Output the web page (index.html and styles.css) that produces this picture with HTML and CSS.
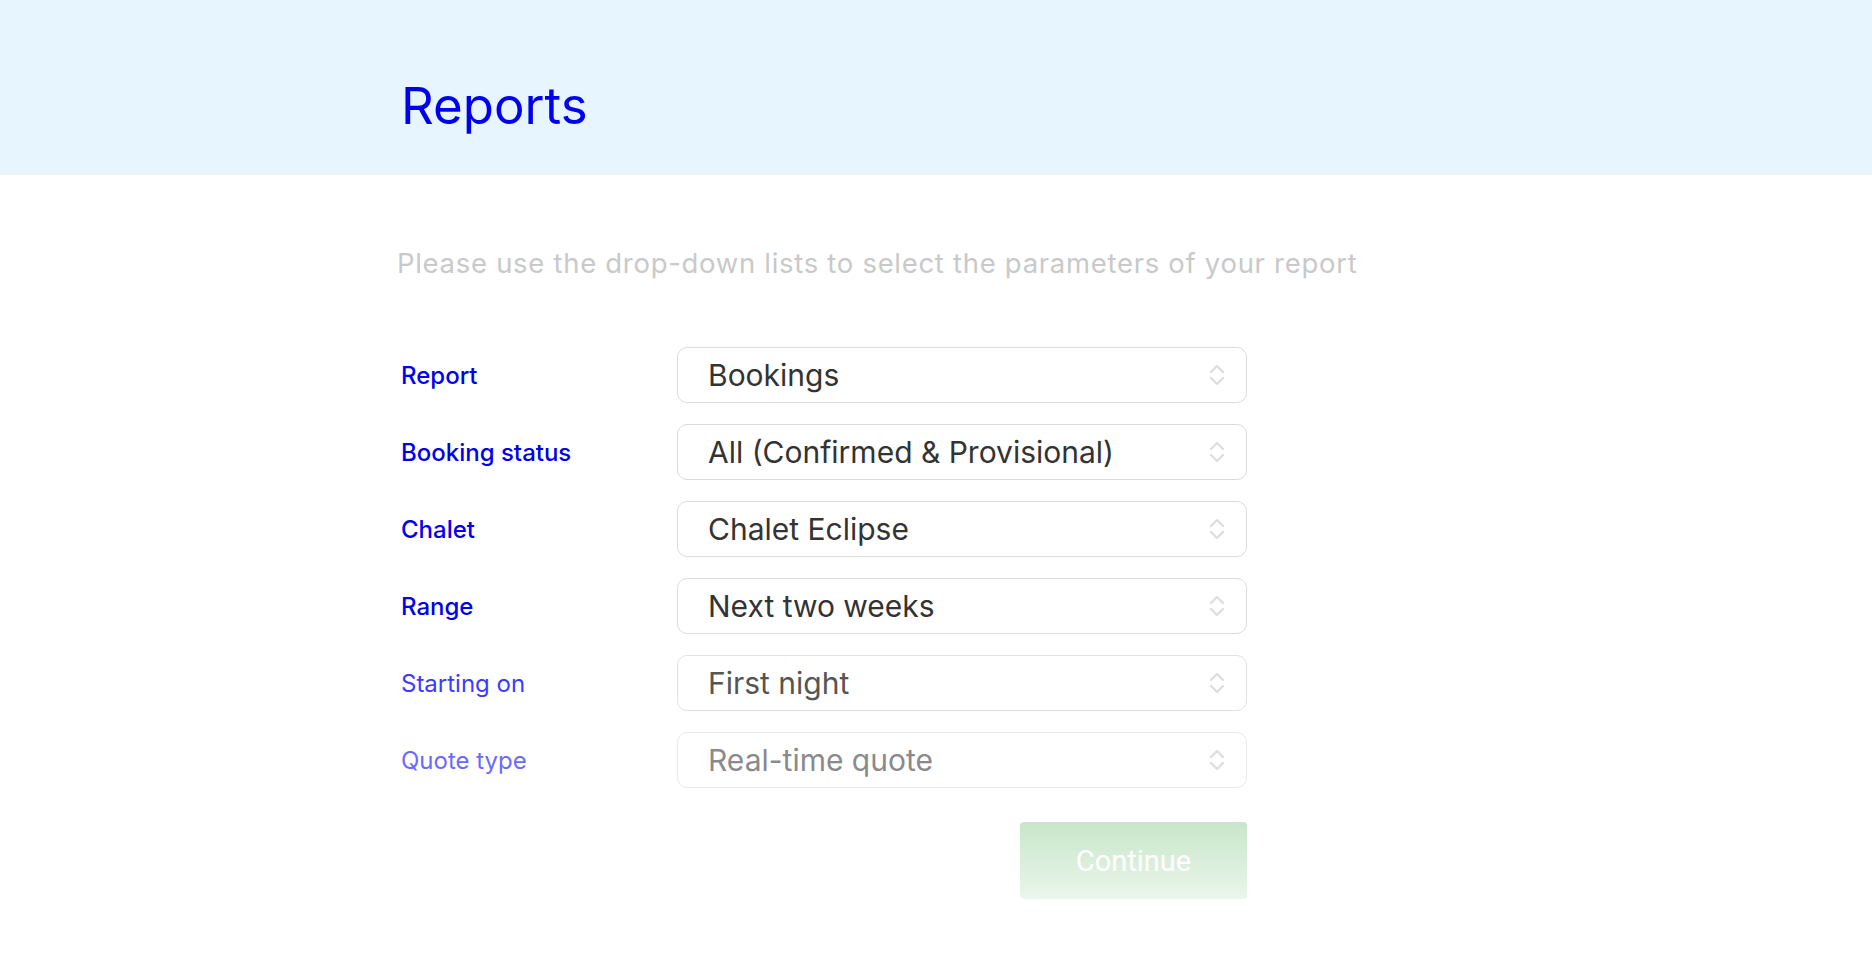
FILE: index.html
```html
<!DOCTYPE html>
<html>
  <head>
    <title>Reports</title>
    <link rel="stylesheet" href="styles.css">
  </head>
  <body>
    <div class="page-header">
      <div class="wrap">
        <h1>Reports</h1>
      </div>
    </div>

    <div class="wrap content">
      <p class="intro">Please use the drop-down lists to select the parameters of your report</p>

      <form class="report-form">
        <div class="row">
          <label class="lbl lbl-1" for="report">Report</label>
          <div class="select-box">
            <select id="report" class="sel sel-1">
              <option>Bookings</option>
            </select>
            <svg class="chev" width="18" height="24" viewBox="0 0 18 24"><path d="M3 9 L9 3 L15 9 M3 15 L9 21 L15 15" fill="none" stroke="currentColor" stroke-width="2.4" stroke-linecap="round" stroke-linejoin="round"/></svg>
          </div>
        </div>
        <div class="row">
          <label class="lbl lbl-1" for="status">Booking status</label>
          <div class="select-box">
            <select id="status" class="sel sel-1">
              <option>All (Confirmed &amp; Provisional)</option>
            </select>
            <svg class="chev" width="18" height="24" viewBox="0 0 18 24"><path d="M3 9 L9 3 L15 9 M3 15 L9 21 L15 15" fill="none" stroke="currentColor" stroke-width="2.4" stroke-linecap="round" stroke-linejoin="round"/></svg>
          </div>
        </div>
        <div class="row">
          <label class="lbl lbl-1" for="chalet">Chalet</label>
          <div class="select-box">
            <select id="chalet" class="sel sel-1">
              <option>Chalet Eclipse</option>
            </select>
            <svg class="chev" width="18" height="24" viewBox="0 0 18 24"><path d="M3 9 L9 3 L15 9 M3 15 L9 21 L15 15" fill="none" stroke="currentColor" stroke-width="2.4" stroke-linecap="round" stroke-linejoin="round"/></svg>
          </div>
        </div>
        <div class="row">
          <label class="lbl lbl-1" for="range">Range</label>
          <div class="select-box">
            <select id="range" class="sel sel-1">
              <option>Next two weeks</option>
            </select>
            <svg class="chev" width="18" height="24" viewBox="0 0 18 24"><path d="M3 9 L9 3 L15 9 M3 15 L9 21 L15 15" fill="none" stroke="currentColor" stroke-width="2.4" stroke-linecap="round" stroke-linejoin="round"/></svg>
          </div>
        </div>
        <div class="row">
          <label class="lbl lbl-2" for="start">Starting on</label>
          <div class="select-box">
            <select id="start" class="sel sel-2">
              <option>First night</option>
            </select>
            <svg class="chev" width="18" height="24" viewBox="0 0 18 24"><path d="M3 9 L9 3 L15 9 M3 15 L9 21 L15 15" fill="none" stroke="currentColor" stroke-width="2.4" stroke-linecap="round" stroke-linejoin="round"/></svg>
          </div>
        </div>
        <div class="row">
          <label class="lbl lbl-3" for="quote">Quote type</label>
          <div class="select-box">
            <select id="quote" class="sel sel-3">
              <option>Real-time quote</option>
            </select>
            <svg class="chev" width="18" height="24" viewBox="0 0 18 24"><path d="M3 9 L9 3 L15 9 M3 15 L9 21 L15 15" fill="none" stroke="currentColor" stroke-width="2.4" stroke-linecap="round" stroke-linejoin="round"/></svg>
          </div>
        </div>

        <div class="actions">
          <button type="button" class="continue-btn" disabled>Continue</button>
        </div>
      </form>
    </div>
  </body>
</html>
```

FILE: styles.css
```css
body {
  margin: 0;
  font-family: Inter, "Open Sans", sans-serif;
  background: #ffffff;
}
.wrap {
  width: 1070px;
  margin-left: 401px;
}
.page-header {
  background: #e7f5ff;
  height: 174px;
  border-bottom: 1px solid #eef0f2;
  display: flex;
  align-items: center;
}
.page-header h1 {
  margin: 0;
  font-size: 51px;
  font-weight: 400;
  color: #0000ee;
  line-height: 1;
  padding-top: 36px;
}
.content {
  padding-top: 68px;
}
.intro {
  margin: 0 0 0 -4px;
  font-size: 27.5px;
  letter-spacing: 0.7px;
  line-height: 40px;
  color: #c9c9c9;
}
.report-form {
  margin-top: 64px;
  width: 846px;
}
.row {
  display: flex;
  align-items: center;
  margin-bottom: 21px;
}
.lbl {
  width: 276px;
  font-size: 24px;
  font-weight: 500;
  color: #0000ee;
}
.lbl-2 {
  font-weight: 400;
  color: #3b3bff;
}
.lbl-3 {
  font-weight: 400;
  color: #6a6aff;
}
.select-box {
  position: relative;
  width: 570px;
  height: 56px;
}
.sel {
  appearance: none;
  -webkit-appearance: none;
  width: 100%;
  height: 100%;
  box-sizing: border-box;
  border: 1px solid #dcdcdc;
  border-radius: 10px;
  background: #ffffff;
  padding: 0 50px 0 30px;
  font-family: Inter, "Open Sans", sans-serif;
  font-size: 30px;
  color: #333333;
  outline: none;
}
.sel-2 {
  color: #555555;
  border-color: #e2e2e2;
}
.sel-3 {
  color: #8a8a8a;
  border-color: #e8e8e8;
}
.chev {
  position: absolute;
  right: 21px;
  top: 16px;
  color: #dedede;
  pointer-events: none;
}
.actions {
  display: flex;
  justify-content: flex-end;
  margin-top: 34px;
}
.continue-btn {
  width: 227px;
  height: 77px;
  border: none;
  border-radius: 4px;
  background: linear-gradient(to bottom, #c8e6c9, #eaf6eb);
  color: #ffffff;
  font-family: Roboto, "Liberation Sans", sans-serif;
  font-size: 29px;
}
```
